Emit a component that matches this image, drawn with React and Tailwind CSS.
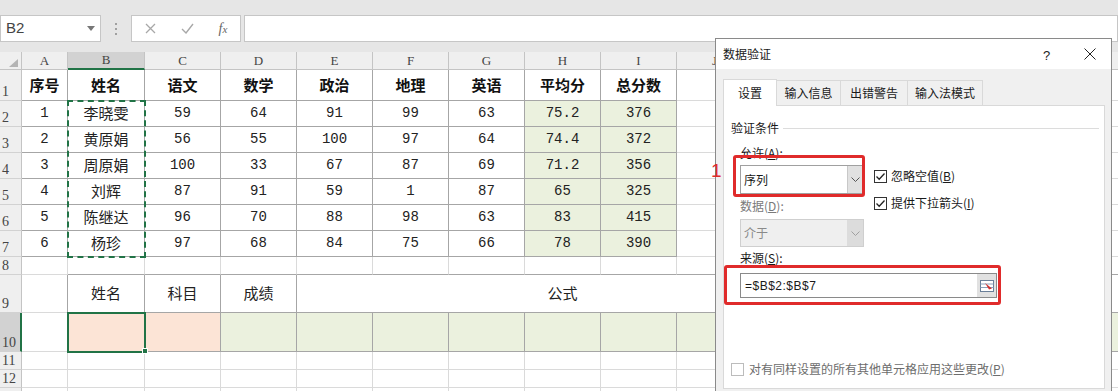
import React from 'react';

const COLS = [46, 77, 76, 76, 76, 76, 76, 76, 76, 76, 76, 76, 76, 76, 76];
const LETTERS = 'ABCDEFGHIJKLMNO'.split('');
// 行高：第 1 行到第 13 行
const ROW_H = [31, 26, 26, 26, 26, 26, 26, 18, 38, 39, 18, 18, 18];

const header = ['序号', '姓名', '语文', '数学', '政治', '地理', '英语', '平均分', '总分数'];
const data = [
  ['1', '李晓雯', '59', '64', '91', '99', '63', '75.2', '376'],
  ['2', '黄原娟', '56', '55', '100', '97', '64', '74.4', '372'],
  ['3', '周原娟', '100', '33', '67', '87', '69', '71.2', '356'],
  ['4', '刘辉', '87', '91', '59', '1', '87', '65', '325'],
  ['5', '陈继达', '96', '70', '88', '98', '63', '83', '415'],
  ['6', '杨珍', '97', '68', '84', '75', '66', '78', '390'],
];
const row9 = { 1: '姓名', 2: '科目', 3: '成绩' };

const inTable = (r, c) => (r >= 1 && r <= 7 && c <= 8) || (r >= 9 && r <= 10 && c >= 1);

const fillOf = (r, c) => {
  if (r >= 2 && r <= 7 && (c === 7 || c === 8)) return 'bg-[#ebf1de]';
  if (r === 10 && (c === 1 || c === 2)) return 'bg-[#fce4d6]';
  if (r === 10 && c >= 3) return 'bg-[#ebf1de]';
  return 'bg-white';
};

const textOf = (r, c) => {
  if (r === 1) return header[c];
  if (r >= 2 && r <= 7) return data[r - 2][c];
  if (r === 9) return row9[c];
  return null;
};

const textStyle = (r, c) => {
  if (r === 1) return 'text-[15px] font-bold text-[#111]';
  if (r >= 2 && r <= 7 && c === 1) return 'text-[15px] text-[#222]';
  if (r >= 2 && r <= 7) return "text-[14px] text-[#222] font-['Liberation_Mono',monospace]";
  return 'text-[15px] text-[#222]';
};

function Cell({ r, c, w, h, span }) {
  const right = inTable(r, c) || inTable(r, (span ? c + span - 1 : c) + 1);
  const bottom = inTable(r, c) || inTable(r + 1, c);
  const txt = span ? '公式' : textOf(r, c);
  return (
    <div
      className={`shrink-0 flex items-center justify-center border-r border-b ${right ? 'border-r-[#a6a6a6]' : 'border-r-[#dadada]'} ${bottom ? 'border-b-[#a6a6a6]' : 'border-b-[#dadada]'} ${fillOf(r, c)} ${textStyle(r, c)}`}
      style={{ width: w, height: h }}
    >
      {txt}
    </div>
  );
}

function SheetRow({ r, h }) {
  const cells = [];
  for (let c = 0; c < COLS.length; c++) {
    if (r === 9 && c === 4) {
      cells.push(<Cell key={c} r={r} c={c} w={76 * 7} h={h} span={7} />);
      c += 6;
      continue;
    }
    cells.push(<Cell key={c} r={r} c={c} w={COLS[c]} h={h} />);
  }
  const sel = r === 10;
  return (
    <div className="flex">
      <div
        className={`shrink-0 w-[22px] flex items-end pl-[2px] pb-[1px] leading-none text-[14px] text-[#444] font-['Liberation_Serif',serif] border-b border-b-[#d2d2d2] ${sel ? 'bg-[#d2d2d2] border-r-2 border-r-[#217346]' : 'bg-[#efefef] border-r border-r-[#c4c4c4]'}`}
        style={{ height: h }}
      >
        {/* 第 13 行的行号在截图底边之外 */}
        {r < 13 ? r : null}
      </div>
      {cells}
    </div>
  );
}

function FormulaBar() {
  return (
    <div className="h-[52px] pt-[15px] flex items-start">
      <div className="w-[101px] h-[27px] bg-white border border-[#c6c6c6] flex items-center justify-between pl-[5px] pr-[5px]">
        <span className="text-[15px] text-[#444] font-['Liberation_Sans',sans-serif]">B2</span>
        <svg width="8" height="5" viewBox="0 0 8 5"><path d="M0 0 L8 0 L4 5 Z" fill="#777" /></svg>
      </div>
      <div className="w-[30px] h-[27px] flex flex-col items-center justify-center gap-[3px]">
        <span className="w-[2px] h-[2px] bg-[#a0a0a0]" />
        <span className="w-[2px] h-[2px] bg-[#a0a0a0]" />
        <span className="w-[2px] h-[2px] bg-[#a0a0a0]" />
      </div>
      <div className="w-[110px] h-[27px] bg-white border border-[#c6c6c6] flex items-center">
        <div className="w-[37px] flex justify-center">
          <svg width="11" height="11" viewBox="0 0 11 11"><path d="M1 1 L10 10 M10 1 L1 10" stroke="#a8a8a8" strokeWidth="1.3" /></svg>
        </div>
        <div className="w-[37px] flex justify-center">
          <svg width="13" height="11" viewBox="0 0 13 11"><path d="M1 6 L5 10 L12 1" fill="none" stroke="#a8a8a8" strokeWidth="1.4" /></svg>
        </div>
        <div className="w-[34px] flex justify-center">
          <span className="italic text-[14px] text-[#666] font-['Liberation_Serif',serif]">f<span className="text-[11px]">x</span></span>
        </div>
      </div>
      <div className="ml-[3px] flex-1 h-[27px] bg-white border border-[#c6c6c6]" />
    </div>
  );
}

function Sheet() {
  return (
    <div className="relative">
      <div className="flex">
        <div className="shrink-0 w-[22px] h-[18px] bg-[#efefef] border-r border-b border-[#c4c4c4] flex items-end justify-end pr-[3px] pb-[2px]">
          <svg width="9" height="8" viewBox="0 0 9 8"><path d="M9 0 L9 8 L0 8 Z" fill="#b4b4b4" /></svg>
        </div>
        {COLS.map((w, i) => (
          <div
            key={i}
            className={`shrink-0 h-[18px] flex items-center justify-center text-[13px] text-[#444] font-['Liberation_Serif',serif] border-r border-r-[#c4c4c4] ${i === 1 ? 'bg-[#d2d2d2] border-b-2 border-b-[#217346]' : 'bg-[#efefef] border-b border-b-[#c4c4c4]'}`}
            style={{ width: w }}
          >
            {LETTERS[i]}
          </div>
        ))}
      </div>
      {ROW_H.map((h, i) => (
        <SheetRow key={i} r={i + 1} h={h} />
      ))}
      {/* 复制区域虚线框 */}
      <div className="absolute left-[67px] top-[48px] w-[79px] h-[158px] border-2 border-dashed border-[#217346]" />
      {/* 当前单元格 B10 */}
      <div className="absolute left-[67px] top-[260px] w-[79px] h-[41px] border-2 border-[#217346]" />
      <div className="absolute left-[142px] top-[296px] w-[6px] h-[6px] bg-[#217346] border border-white" />
    </div>
  );
}

const Chevron = ({ color }) => (
  <svg width="9" height="5" viewBox="0 0 9 5"><path d="M0.5 0.5 L4.5 4.5 L8.5 0.5" fill="none" stroke={color} /></svg>
);

const Check = ({ checked, disabled }) => (
  <span className={`shrink-0 w-[13px] h-[13px] border bg-white flex items-center justify-center ${disabled ? 'border-[#bcbcbc]' : 'border-[#333]'}`}>
    {checked && (
      <svg width="11" height="11" viewBox="0 0 11 11"><path d="M1.5 5.5 L4.2 8.3 L9.5 2.5" fill="none" stroke="#222" strokeWidth="1.3" /></svg>
    )}
  </span>
);

function Dialog() {
  return (
    <div className="absolute left-[715px] top-[38px] w-[397px] h-[360px] bg-[#f0f0f0] border border-[#8a8a8a] text-[12px] text-[#1a1a1a]">
      <div className="h-[30px] bg-white flex items-center pl-[7px] relative">
        <span>数据验证</span>
        <span className="absolute left-[327px] top-[7px] text-[13px] font-['Liberation_Sans',sans-serif] text-[#222]">?</span>
        <svg className="absolute left-[368px] top-[9px]" width="12" height="12" viewBox="0 0 12 12"><path d="M0.5 0.5 L11.5 11.5 M11.5 0.5 L0.5 11.5" stroke="#222" /></svg>
      </div>
      <div className="pl-[7px] pt-[9px]">
        <div className="flex items-end h-[27px]">
          <div className="relative z-10 w-[54px] h-[27px] -mb-px bg-white border border-b-0 border-[#d9d9d9] flex items-center justify-center">设置</div>
          <div className="w-[64px] h-[25px] bg-[#f0f0f0] border border-l-0 border-b-0 border-[#d9d9d9] flex items-center justify-center">输入信息</div>
          <div className="w-[67px] h-[25px] bg-[#f0f0f0] border border-l-0 border-b-0 border-[#d9d9d9] flex items-center justify-center">出错警告</div>
          <div className="w-[75px] h-[25px] bg-[#f0f0f0] border border-l-0 border-b-0 border-[#d9d9d9] flex items-center justify-center">输入法模式</div>
        </div>
        <div className="w-[382px] h-[284px] bg-white border border-[#d9d9d9] flex flex-col pl-[7px] pr-[5px]">
          <div className="mt-[14px] h-[16px] flex items-center">
            <span>验证条件</span>
            <div className="flex-1 h-px bg-[#dcdcdc] ml-[4px]" />
          </div>
          <div className="mt-[10px] ml-[9px] flex">
            <div className="w-[124px] flex flex-col">
              <div className="h-[14px] leading-[14px]">允许(<span className="underline">A</span>):</div>
              <div className="mt-[5px] h-[29px] border border-[#a0a0a0] flex">
                <div className="flex-1 pl-[3px] flex items-center">序列</div>
                <div className="w-[16px] bg-[#e1e1e1] border-l border-[#c8c8c8] flex items-center justify-center">
                  <Chevron color="#555" />
                </div>
              </div>
              <div className="mt-[5px] h-[14px] leading-[14px] text-[#7a7a7a]">数据(<span className="underline">D</span>):</div>
              <div className="mt-[6px] h-[28px] border border-[#cfcfcf] bg-[#efefef] flex">
                <div className="flex-1 pl-[3px] flex items-center text-[#8a8a8a]">介于</div>
                <div className="w-[16px] bg-[#dcdcdc] flex items-center justify-center">
                  <Chevron color="#a0a0a0" />
                </div>
              </div>
            </div>
            <div className="ml-[10px] mt-[23px] flex flex-col gap-[13px]">
              <div className="h-[14px] flex items-center gap-[4px]">
                <Check checked />
                <span>忽略空值(<span className="underline">B</span>)</span>
              </div>
              <div className="h-[14px] flex items-center gap-[4px]">
                <Check checked />
                <span>提供下拉箭头(<span className="underline">I</span>)</span>
              </div>
            </div>
          </div>
          <div className="mt-[4px] ml-[9px] h-[14px] leading-[14px]">来源(<span className="underline">S</span>):</div>
          <div className="mt-[8px] ml-[9px] w-[257px] h-[25px] border border-[#8a8a8a] flex">
            <div className="flex-1 pl-[4px] flex items-center font-['Liberation_Sans',sans-serif] tracking-[0.5px]">=$B$2:$B$7</div>
            <div className="w-[19px] bg-[#e1e1e1] flex items-center justify-center">
              <svg width="14" height="12" viewBox="0 0 14 12">
                <rect x="0.5" y="0.5" width="13" height="11" fill="#fff" stroke="#6a7f99" />
                <path d="M0.5 4 H13.5 M0.5 7.5 H13.5" stroke="#8aa0bb" />
                <path d="M5 3 L12 8.5 L9 9.5 Z" fill="#d03030" />
              </svg>
            </div>
          </div>
          <div className="mt-auto mb-[12px] h-[14px] flex items-center gap-[5px] text-[#6d6d6d]">
            <Check disabled />
            <span>对有同样设置的所有其他单元格应用这些更改(<span className="underline">P</span>)</span>
          </div>
        </div>
      </div>
      {/* 标注红框 */}
      <div className="absolute left-[17px] top-[116px] w-[132px] h-[42px] border-[3px] border-[#e02b2b] rounded-[3px]" />
      <div className="absolute left-[8px] top-[226px] w-[277px] h-[40px] border-[3px] border-[#e02b2b] rounded-[3px]" />
    </div>
  );
}

export default function App() {
  return (
    <div className="relative w-[1118px] h-[391px] overflow-hidden bg-[#e6e6e6] font-['Noto_Sans_CJK_SC',sans-serif]">
      <FormulaBar />
      <Sheet />
      <Dialog />
      <div className="absolute left-[711px] top-[161px] text-[19px] leading-none text-[#e02b2b] font-['Liberation_Sans',sans-serif]">1</div>
    </div>
  );
}
